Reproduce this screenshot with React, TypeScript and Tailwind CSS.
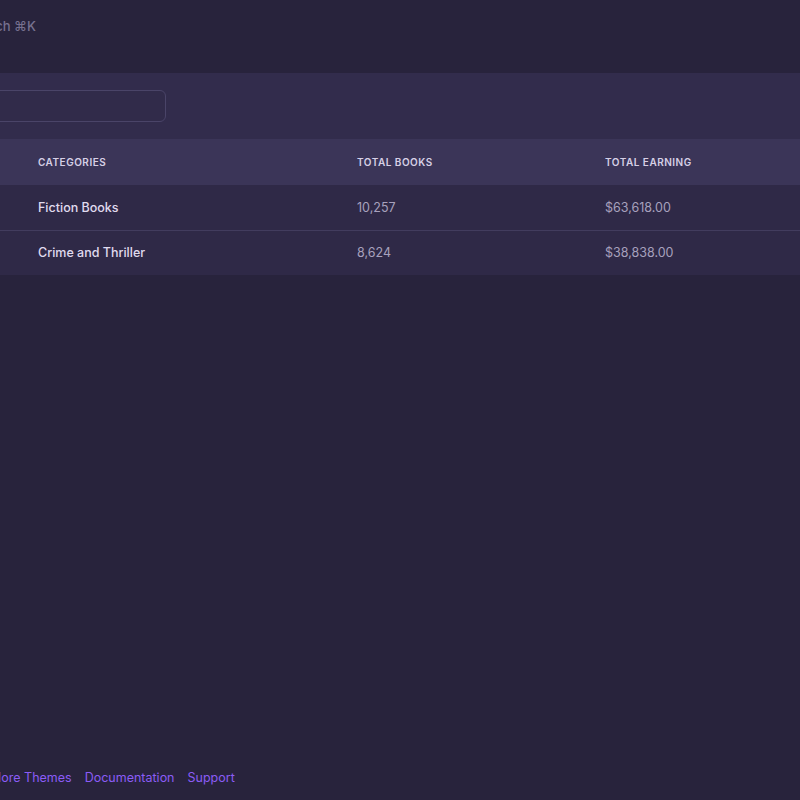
import React from 'react';

const rows = [
  { name: 'Fiction Books', books: '10,257', earning: '$63,618.00' },
  { name: 'Crime and Thriller', books: '8,624', earning: '$38,838.00' },
];

const App: React.FC = () => {
  return (
    <div
      className="w-[800px] h-[800px] overflow-hidden bg-[#28233c] flex flex-col"
      style={{ fontFamily: 'Inter, "Noto Sans", sans-serif' }}
    >
      {/* top bar */}
      <div className="h-[73px] flex items-center -ml-[33px] pb-[20px]">
        <span className="text-[13px] font-medium text-[#77718f]">Search ⌘K</span>
      </div>

      {/* panel */}
      <div className="bg-[#322c4c] pt-[17px]">
        <div className="-ml-[40px] w-[206px] h-[32px] rounded-md border border-[#4a4468] bg-[#312b4a]" />
        <div className="mt-[17px]">
          <div className="h-[46px] bg-[#3b3558] grid grid-cols-[319px_248px_1fr] items-center pl-[38px] text-[10px] font-semibold uppercase tracking-wider text-[#d6d0e6]">
            <div>Categories</div>
            <div>Total Books</div>
            <div>Total Earning</div>
          </div>
          {rows.map((r, i) => (
            <div
              key={r.name}
              className={`h-[45px] grid grid-cols-[319px_248px_1fr] items-center pl-[38px] pt-[1px] text-[12.5px] bg-[#2f2947] ${
                i > 0 ? 'border-t border-[#423c5e]' : ''
              }`}
            >
              <div className="text-[#e0dbef] font-medium">{r.name}</div>
              <div className="text-[#a7a1bd]">{r.books}</div>
              <div className="text-[#a7a1bd]">{r.earning}</div>
            </div>
          ))}
        </div>
      </div>

      <div className="flex-1" />

      {/* footer */}
      <div className="h-[44px] flex items-start -ml-[10px] gap-[13px] text-[12.5px] text-[#8b5cf6] pt-[16px]">
        <span className="leading-none">More Themes</span>
        <span className="leading-none">Documentation</span>
        <span className="leading-none">Support</span>
      </div>
    </div>
  );
};

export default App;
